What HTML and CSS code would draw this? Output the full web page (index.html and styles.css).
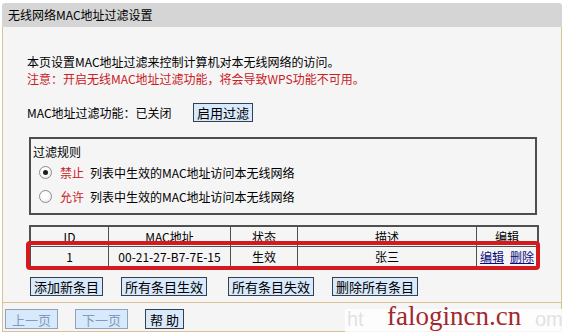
FILE: index.html
```html
<!DOCTYPE html>
<html>
<head>
<meta charset="utf-8">
<link rel="stylesheet" href="styles.css">
</head>
<body>
<div class="panel">
  <div class="title">无线网络MAC地址过滤设置</div>
  <div class="content">
    <p class="line">本页设置MAC地址过滤来控制计算机对本无线网络的访问。</p>
    <p class="line warn">注意：开启无线MAC地址过滤功能，将会导致WPS功能不可用。</p>
    <div class="status">
      <span class="status-text">MAC地址过滤功能：已关闭</span>
      <button class="btn">启用过滤</button>
    </div>
    <div class="rules">
      <div class="rules-title">过滤规则</div>
      <div class="rule"><span class="radio checked"></span><span class="warn">禁止</span><span class="rule-text">列表中生效的MAC地址访问本无线网络</span></div>
      <div class="rule"><span class="radio"></span><span class="warn">允许</span><span class="rule-text">列表中生效的MAC地址访问本无线网络</span></div>
    </div>
    <table class="list">
      <tr>
        <td class="c-id">ID</td>
        <td class="c-mac">MAC地址</td>
        <td class="c-state">状态</td>
        <td class="c-desc">描述</td>
        <td class="c-edit">编辑</td>
      </tr>
      <tr>
        <td>1</td>
        <td>00-21-27-B7-7E-15</td>
        <td>生效</td>
        <td>张三</td>
        <td><a class="link">编辑</a><a class="link">删除</a></td>
      </tr>
    </table>
    <div class="actions">
      <button class="btn">添加新条目</button>
      <button class="btn">所有条目生效</button>
      <button class="btn">所有条目失效</button>
      <button class="btn">删除所有条目</button>
    </div>
  </div>
  <div class="footer">
    <button class="btn btn-nav disabled">上一页</button>
    <button class="btn btn-nav disabled">下一页</button>
    <button class="btn btn-help">帮 助</button>
  </div>
</div>
<div class="redbox"></div>
<div class="watermark"><span class="wm-faint wm-left">ht</span><span class="wm-text">falogincn.cn</span><span class="wm-faint wm-right">om</span></div>
</body>
</html>
```
FILE: styles.css
```css
html, body {
  margin: 0;
  padding: 0;
}
body {
  width: 566px;
  height: 332px;
  overflow: hidden;
  background: #ffffff;
  position: relative;
  font-family: "Noto Sans CJK SC", sans-serif;
  font-size: 12px;
  line-height: 17px;
  color: #000;
}
.panel {
  margin: 3px 0 0 2px;
  width: 560px;
}
.title {
  height: 24px;
  line-height: 24px;
  background: #d5d5d5;
  padding-left: 6px;
  border-radius: 3px 3px 0 0;
  font-size: 12px;
}
.content {
  background: #f5f5f5;
  border-left: 1px solid #dcc096;
  border-right: 1px solid #dcc096;
  padding: 26px 0 6px 24px;
}
.line {
  margin: 0;
  height: 17px;
}
.warn {
  color: #c8201f;
}
.status {
  margin-top: 16px;
  height: 19px;
  display: flex;
  align-items: center;
}
.status-text {
  width: 166px;
}
.btn {
  font-family: "Noto Sans CJK SC", sans-serif;
  font-size: 13px;
  line-height: 17px;
  height: 19px;
  padding: 0 3px;
  margin: 0;
  background: #d8e9fb;
  border: 1px solid #33414f;
  color: #000;
  border-radius: 0;
  white-space: nowrap;
}
.rules {
  margin: 15px 0 0 2px;
  width: 508px;
  box-sizing: border-box;
  border: 2px solid #4d4d4d;
  padding: 4px 0 5px 2px;
}
.rules-title {
  height: 17px;
}
.rule {
  height: 24px;
  display: flex;
  align-items: center;
  margin-left: 6px;
}
.radio {
  width: 13px;
  height: 13px;
  box-sizing: border-box;
  border-radius: 50%;
  border: 1px solid #8c8c8c;
  background: radial-gradient(circle at 40% 40%, #ffffff 30%, #e4e4e4 100%);
  margin-right: 8px;
  display: flex;
  align-items: center;
  justify-content: center;
}
.radio.checked::after {
  content: "";
  width: 5px;
  height: 5px;
  border-radius: 50%;
  background: #1c1c1c;
}
.rule-text {
  margin-left: 6px;
}
.list {
  margin: 10px 0 0 2px;
  width: 508px;
  table-layout: fixed;
  border-collapse: collapse;
  border: 2px solid #505050;
}
.list td {
  border: 1px solid #505050;
  height: 19px;
  padding: 0;
  text-align: center;
  line-height: 17px;
  white-space: nowrap;
  overflow: hidden;
}
.c-id { width: 77px; }
.c-mac { width: 121px; }
.c-state { width: 66px; }
.c-desc { width: 178px; }
.c-edit { width: 60px; }
.link {
  color: #0a0a80;
  text-decoration: underline;
  margin: 0 3px;
}
.actions {
  margin: 9px 0 0 3px;
  display: flex;
  gap: 18px;
}
.actions .btn:nth-child(3) {
  margin-left: 3px;
}
.footer {
  background: #f5f5f5;
  border: 1px solid #dcc096;
  box-sizing: border-box;
  height: 30px;
  padding: 6px 0 0 2px;
  display: flex;
  align-items: flex-start;
  gap: 17px;
}
.btn-nav {
  height: 20px;
  padding: 0 6px;
}
.btn-help {
  height: 20px;
  padding: 0 4px;
}
.disabled {
  color: #7d9bc2;
  border-color: #8ea3bb;
}
.redbox {
  position: absolute;
  left: 26px;
  top: 241px;
  width: 514px;
  height: 29px;
  box-sizing: border-box;
  border: 4px solid #d41a1c;
  border-radius: 4px;
}
.watermark {
  position: absolute;
  left: 345px;
  top: 309px;
  width: 218px;
  height: 23px;
  background: rgba(255, 255, 255, 0.82);
}
.wm-text {
  position: absolute;
  left: 42px;
  top: -6px;
  font-family: "Liberation Serif", serif;
  font-size: 27px;
  line-height: 27px;
  color: #a3282d;
  white-space: nowrap;
}
.wm-faint {
  position: absolute;
  top: -2px;
  font-family: "Liberation Sans", sans-serif;
  font-size: 20px;
  line-height: 24px;
  color: #e2e2e2;
}
.wm-left { left: 2px; }
.wm-right { left: 190px; }
```
